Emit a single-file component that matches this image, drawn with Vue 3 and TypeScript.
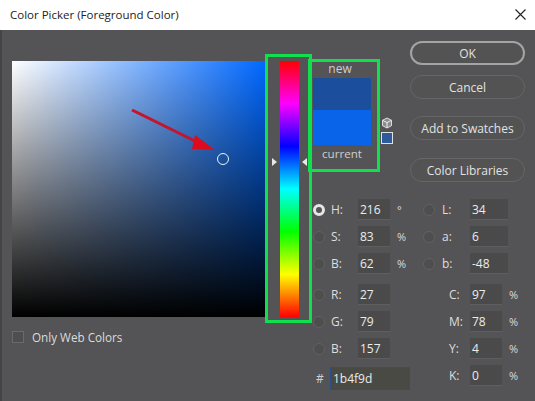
<script setup lang="ts">
interface Field {
  key: string
  label: string
  value: string
  unit?: string
  radio?: boolean
  selected?: boolean
}

const hsb: Field[] = [
  { key: 'h', label: 'H:', value: '216', unit: '°', radio: true, selected: true },
  { key: 's', label: 'S:', value: '83', unit: '%', radio: true },
  { key: 'br', label: 'B:', value: '62', unit: '%', radio: true },
]
const rgb: Field[] = [
  { key: 'r', label: 'R:', value: '27', radio: true },
  { key: 'g', label: 'G:', value: '79', radio: true },
  { key: 'b', label: 'B:', value: '157', radio: true },
]
const lab: Field[] = [
  { key: 'l', label: 'L:', value: '34', radio: true },
  { key: 'a', label: 'a:', value: '6', radio: true },
  { key: 'bb', label: 'b:', value: '-48', radio: true },
]
const cmyk: Field[] = [
  { key: 'c', label: 'C:', value: '97', unit: '%' },
  { key: 'm', label: 'M:', value: '78', unit: '%' },
  { key: 'y', label: 'Y:', value: '4', unit: '%' },
  { key: 'k', label: 'K:', value: '0', unit: '%' },
]
const buttons = [
  { label: 'OK', cls: 'btn-ok' },
  { label: 'Cancel', cls: 'btn-cancel' },
  { label: 'Add to Swatches', cls: 'btn-add' },
  { label: 'Color Libraries', cls: 'btn-lib' },
]
</script>

<template>
  <div class="window">
    <header class="titlebar">
      <span class="title">Color Picker (Foreground Color)</span>
      <svg class="close" width="11" height="11" viewBox="0 0 11 11">
        <path d="M0.5 0.5L10.5 10.5M10.5 0.5L0.5 10.5" stroke="#222" stroke-width="1.1" fill="none" />
      </svg>
    </header>

    <main class="body">
      <section class="left">
        <div class="field"></div>
        <label class="web"><span class="check"></span>Only Web Colors</label>
      </section>

      <section class="hue-col">
        <div class="hue"></div>
        <span class="tri tri-l"></span>
        <span class="tri tri-r"></span>
      </section>

      <section class="right">
        <div class="top">
          <div class="preview">
            <span class="pv-label pv-new">new</span>
            <div class="sw sw-new"></div>
            <div class="sw sw-cur"></div>
            <span class="pv-label pv-cur">current</span>
          </div>
          <div class="side">
            <svg width="12" height="12" viewBox="0 0 12 12">
              <path d="M6 1L10.5 3.3V8.7L6 11L1.5 8.7V3.3Z" fill="#8c8c8c" stroke="#ddd" stroke-width="1" />
              <path d="M1.5 3.3L6 5.6L10.5 3.3M6 5.6V11" stroke="#eee" stroke-width="1" fill="none" />
            </svg>
            <span class="web-chip"></span>
          </div>
          <div class="buttons">
            <button v-for="b in buttons" :key="b.label" class="btn" :class="b.cls">{{ b.label }}</button>
          </div>
        </div>

        <div class="values">
          <div class="col col-a">
            <div class="group">
              <div v-for="f in hsb" :key="f.key" class="row">
                <span class="radio" :class="{ on: f.selected }"></span>
                <span class="lbl">{{ f.label }}</span>
                <span class="input">{{ f.value }}</span>
                <span class="unit">{{ f.unit }}</span>
              </div>
            </div>
            <div class="group">
              <div v-for="f in rgb" :key="f.key" class="row">
                <span class="radio"></span>
                <span class="lbl">{{ f.label }}</span>
                <span class="input">{{ f.value }}</span>
                <span class="unit"></span>
              </div>
            </div>
            <div class="row hex-row">
              <span class="hash">#</span>
              <span class="hex">1b4f9d</span>
            </div>
          </div>
          <div class="col col-b">
            <div class="group">
              <div v-for="f in lab" :key="f.key" class="row">
                <span class="radio"></span>
                <span class="lbl lbl-l">{{ f.label }}</span>
                <span class="input wide">{{ f.value }}</span>
              </div>
            </div>
            <div class="group cmyk">
              <div v-for="f in cmyk" :key="f.key" class="row">
                <span class="lbl lbl-c">{{ f.label }}</span>
                <span class="input narrow">{{ f.value }}</span>
                <span class="unit">{{ f.unit }}</span>
              </div>
            </div>
          </div>
        </div>
      </section>
    </main>

    <!-- annotations drawn over the screenshot -->
    <div class="mark mark-hue"></div>
    <div class="mark mark-preview"></div>
    <svg class="arrow" width="110" height="70" viewBox="0 0 110 70">
      <path d="M1 1L68 34" stroke="#c8142a" stroke-width="3" fill="none" />
      <path d="M64 26L84 41L61 40Z" fill="#dd0c1c" />
    </svg>
    <span class="picker"></span>
  </div>
</template>

<style>
html, body { margin: 0; padding: 0; background: #535353; }
</style>

<style scoped>
.window {
  position: relative;
  width: 535px;
  height: 401px;
  overflow: hidden;
  background: #545355;
  font-family: "Open Sans", "Noto Sans", sans-serif;
  font-size: 12px;
  color: #e4e4e4;
  display: flex;
  flex-direction: column;
}
.titlebar {
  height: 30px;
  flex: none;
  background: #fff;
  color: #222;
  display: flex;
  align-items: center;
  justify-content: space-between;
  padding: 0 10px 1px 10px;
  box-sizing: border-box;
}
.title { font-size: 11.5px; }
.close { margin-right: -1px; }
.body {
  flex: 1;
  display: flex;
  align-items: flex-start;
  padding-left: 10px;
  border-left: 2px solid #444;
}
.left { width: 253px; padding-top: 31px; flex: none; }
.field {
  height: 256px;
  background:
    linear-gradient(to top, #000, rgba(0, 0, 0, 0)),
    linear-gradient(to right, #fff, #0068ff);
}
.web {
  display: flex;
  align-items: center;
  gap: 8px;
  margin-top: 12px;
  height: 16px;
  font-size: 11.7px;
  color: #dcdcdc;
}
.check {
  width: 10px;
  height: 10px;
  border: 1px solid #6a6a6a;
  background: #4e4e4e;
}
.hue-col {
  position: relative;
  width: 48px;
  flex: none;
  padding: 31px 0 0 15px;
  box-sizing: border-box;
}
.hue {
  width: 19px;
  height: 256px;
  background: linear-gradient(to bottom, #f00, #f0f 16.67%, #00f 33.33%, #0ff 50%, #0f0 66.67%, #ff0 83.33%, #f00);
}
.tri {
  position: absolute;
  top: 128px;
  width: 0;
  height: 0;
  border-top: 4px solid transparent;
  border-bottom: 4px solid transparent;
}
.tri-l { left: 7px; border-left: 5px solid #e8e8e8; }
.tri-r { left: 37px; border-right: 5px solid #e8e8e8; }
.right { flex: 1; min-width: 0; }
.top { display: flex; align-items: flex-start; height: 169px; }
.preview {
  width: 58px;
  flex: none;
  padding-top: 31px;
  display: flex;
  flex-direction: column;
  align-items: center;
}
.pv-label { color: #cfcfcf; line-height: 15px; height: 17px; }
.pv-new { margin-left: -4px; }
.pv-cur { margin-top: 1px; font-size: 11.6px; }
.sw { width: 58px; }
.sw-new { height: 32px; background: #1b4f9d; }
.sw-cur { height: 35px; background: #0a64ea; }
.side {
  width: 12px;
  flex: none;
  margin: 87px 0 0 10px;
  display: flex;
  flex-direction: column;
  gap: 3px;
}
.web-chip {
  width: 10px;
  height: 10px;
  background: #2c5a9c;
  border: 1px solid #e0e0e0;
}
.buttons { width: 115px; margin: 11px 0 0 17px; display: flex; flex-direction: column; flex: none; }
.btn {
  height: 24px;
  border: 1px solid #666;
  border-radius: 12px;
  background: #535353;
  color: #e2e2e2;
  font: inherit;
  padding: 0;
}
.btn-ok { border: 2px solid #a4a4a4; }
.btn-cancel { margin-top: 10px; }
.btn-add { margin-top: 17px; }
.btn-lib { margin-top: 18px; }
.values { display: flex; }
.col { flex: none; display: flex; flex-direction: column; }
.col-a { width: 110px; }
.group { display: flex; flex-direction: column; gap: 6px; }
.col-a .group + .group, .col-b .group + .group { margin-top: 10px; }
.row { display: flex; align-items: center; height: 21px; }
.radio {
  width: 12px;
  height: 12px;
  flex: none;
  box-sizing: border-box;
  border-radius: 50%;
  background: #4e4e4e;
  border: 1px solid #616161;
}
.radio.on { background: #535353; border: 3px solid #e6e6e6; }
.lbl { width: 33px; flex: none; padding-left: 6px; box-sizing: border-box; color: #dedede; }
.input {
  width: 32px;
  height: 21px;
  flex: none;
  box-sizing: border-box;
  padding-left: 2px;
  line-height: 21px;
  background: #4a4a4a;
  color: #ececec;
  border-bottom: 1px solid #5e5e5e;
}
.input.wide { width: 38px; }
.input.narrow { width: 32px; }
.unit { margin-left: 7px; width: 14px; color: #dcdcdc; font-size: 11px; }
.hex-row { margin-top: 8px; height: 23px; }
.hash { width: 17px; flex: none; padding-left: 3px; box-sizing: border-box; color: #cfcfcf; }
.hex {
  width: 80px;
  height: 23px;
  flex: none;
  box-sizing: border-box;
  padding-left: 2px;
  line-height: 21px;
  background: #4a4a44;
  border: 1px solid #2a4f88;
  color: #ececec;
}
.lbl-l { width: 35px; padding-left: 7px; }
.lbl-c { width: 36px; padding-left: 15px; }
.cmyk { padding-left: 11px; }
.mark {
  position: absolute;
  box-sizing: border-box;
  border: 3px solid #10e04e;
}
.mark-hue { left: 265px; top: 54px; width: 47px; height: 269px; }
.mark-preview { left: 308px; top: 59px; width: 72px; height: 113px; }
.arrow { position: absolute; left: 131px; top: 109px; }
.picker {
  position: absolute;
  left: 217px;
  top: 153px;
  width: 12px;
  height: 12px;
  box-sizing: border-box;
  border-radius: 50%;
  border: 1px solid #f2f2f2;
}
</style>
